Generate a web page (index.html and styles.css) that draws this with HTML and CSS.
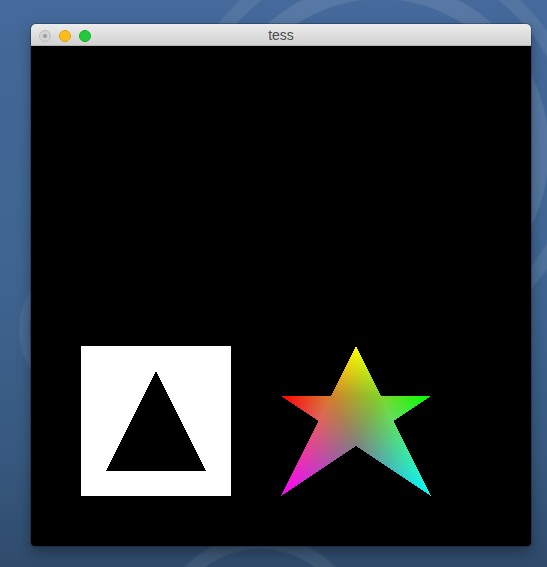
FILE: index.html
```html
<!DOCTYPE html>
<html lang="en">
<head>
<meta charset="utf-8">
<title>tess</title>
<link rel="stylesheet" href="styles.css">
</head>
<body>
<div class="desktop">
  <div class="window">
    <div class="titlebar">
      <div class="lights">
        <span class="light light-close"><span class="dot"></span></span>
        <span class="light light-min"></span>
        <span class="light light-max"></span>
      </div>
      <div class="title">tess</div>
      <div class="spacer"></div>
    </div>
    <canvas id="gl" class="viewport" width="500" height="500"></canvas>
  </div>
</div>
<script src="script.js"></script>
</body>
</html>
```

FILE: styles.css
```css
html, body {
  margin: 0;
  padding: 0;
}
body {
  width: 547px;
  height: 567px;
  overflow: hidden;
  font-family: "Liberation Sans", Arial, sans-serif;
}
.desktop {
  width: 547px;
  height: 567px;
  box-sizing: border-box;
  padding: 24px 0 0 31px;
  background:
    radial-gradient(circle at 380px 150px, transparent 150px, rgba(255,255,255,0.10) 152px, rgba(255,255,255,0.10) 168px, transparent 170px),
    radial-gradient(circle at 380px 150px, transparent 190px, rgba(255,255,255,0.08) 192px, rgba(255,255,255,0.08) 204px, transparent 206px),
    radial-gradient(circle at 90px 330px, transparent 60px, rgba(255,255,255,0.06) 62px, rgba(255,255,255,0.06) 70px, transparent 72px),
    radial-gradient(circle at 260px 640px, transparent 90px, rgba(255,255,255,0.07) 92px, rgba(255,255,255,0.07) 104px, transparent 106px),
    linear-gradient(180deg, #44699a 0%, #3f6592 45%, #37597f 80%, #2f4b6c 100%);
}
.window {
  width: 500px;
  border-radius: 5px 5px 4px 4px;
  overflow: hidden;
  box-shadow: 0 0 0 1px rgba(0,0,0,0.22), 0 6px 14px rgba(0,0,0,0.35);
}
.titlebar {
  height: 22px;
  box-sizing: border-box;
  display: grid;
  grid-template-columns: 1fr auto 1fr;
  align-items: center;
  background: linear-gradient(180deg, #ececec 0%, #dcdcdc 60%, #d2d2d2 100%);
  border-bottom: 1px solid #b4b4b4;
}
.lights {
  display: flex;
  gap: 8px;
  padding-left: 8px;
  align-items: center;
}
.light {
  width: 12px;
  height: 12px;
  border-radius: 50%;
  box-sizing: border-box;
  display: flex;
  align-items: center;
  justify-content: center;
}
.light-close {
  background: #d3d3d3;
  border: 1px solid #bdbdbd;
}
.light-close .dot {
  width: 4px;
  height: 4px;
  border-radius: 50%;
  background: #9c9c9c;
}
.light-min {
  background: #fdbc1c;
  border: 1px solid #e2a511;
}
.light-max {
  background: #22c93c;
  border: 1px solid #16ad2b;
}
.title {
  font-size: 14px;
  color: #4d4d4d;
  line-height: 22px;
  padding-bottom: 1px;
}
.viewport {
  display: block;
  width: 500px;
  height: 500px;
  background: #000;
}
```

FILE: script.js
```js
(function () {
  var cv = document.getElementById('gl');
  var ctx = cv.getContext('2d');
  var W = 500, H = 500;
  var img = ctx.createImageData(W, H);
  var d = img.data;
  for (var i = 0; i < d.length; i += 4) { d[i] = 0; d[i + 1] = 0; d[i + 2] = 0; d[i + 3] = 255; }

  function V(x, y, r, g, b) { return { x: x, y: y, c: [r, g, b] }; }

  function tri(p0, p1, p2) {
    var area = (p1.x - p0.x) * (p2.y - p0.y) - (p2.x - p0.x) * (p1.y - p0.y);
    if (area === 0) return;
    var minX = Math.max(0, Math.floor(Math.min(p0.x, p1.x, p2.x)) - 1);
    var maxX = Math.min(W - 1, Math.ceil(Math.max(p0.x, p1.x, p2.x)) + 1);
    var minY = Math.min(p0.y, p1.y, p2.y), maxY = Math.max(p0.y, p1.y, p2.y);
    var pyA = Math.max(0, Math.floor(H - maxY - 0.5) - 1);
    var pyB = Math.min(H - 1, Math.ceil(H - minY - 0.5) + 1);
    for (var py = pyA; py <= pyB; py++) {
      var gy = H - py - 0.5;
      for (var px = minX; px <= maxX; px++) {
        var gx = px + 0.5;
        var w0 = ((p1.x - gx) * (p2.y - gy) - (p2.x - gx) * (p1.y - gy)) / area;
        var w1 = ((p2.x - gx) * (p0.y - gy) - (p0.x - gx) * (p2.y - gy)) / area;
        var w2 = 1 - w0 - w1;
        if (w0 >= -1e-9 && w1 >= -1e-9 && w2 >= -1e-9) {
          var o = (py * W + px) * 4;
          for (var k = 0; k < 3; k++) {
            var v = w0 * p0.c[k] + w1 * p1.c[k] + w2 * p2.c[k];
            d[o + k] = Math.max(0, Math.min(255, Math.round(v * 255)));
          }
        }
      }
    }
  }

  // Rectangle with triangular hole (GL coordinates, y up)
  var r0 = V(50, 50, 1, 1, 1), r1 = V(200, 50, 1, 1, 1), r2 = V(200, 200, 1, 1, 1), r3 = V(50, 200, 1, 1, 1);
  tri(r0, r1, r2);
  tri(r0, r2, r3);
  tri(V(75, 75, 0, 0, 0), V(125, 175, 0, 0, 0), V(175, 75, 0, 0, 0));

  // Star, vertex colours, intersections combined from edge endpoints
  var S0 = V(250, 50, 1, 0, 1);
  var S1 = V(325, 200, 1, 1, 0);
  var S2 = V(400, 50, 0, 1, 1);
  var S3 = V(250, 150, 1, 0, 0);
  var S4 = V(400, 150, 0, 1, 0);
  var A = V(300, 150, 5 / 6, 1 / 2, 1 / 6);
  var B = V(350, 150, 1 / 2, 5 / 6, 1 / 6);
  var C = V(287.5, 125, 0.875, 0.375, 0.375);
  var D = V(362.5, 125, 0.375, 0.875, 0.375);
  var E = V(325, 100, 0.5, 0.5, 0.5);

  tri(S0, C, E);
  tri(S3, A, C);
  tri(S1, A, B);
  tri(S4, B, D);
  tri(S2, D, E);
  tri(C, A, E);
  tri(A, E, B);
  tri(E, B, D);

  ctx.putImageData(img, 0, 0);
})();
```
